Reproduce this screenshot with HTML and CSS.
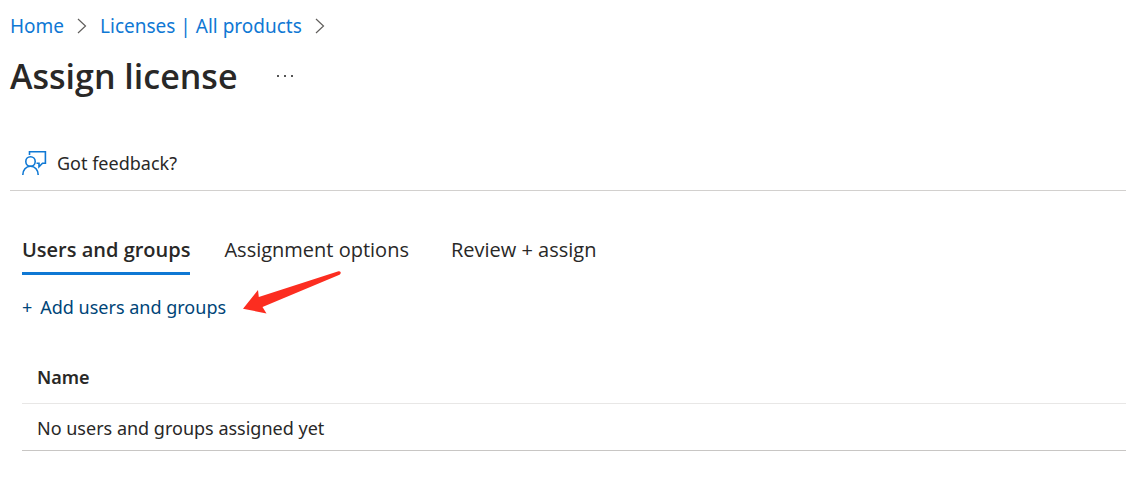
FILE: index.html
```html
<!DOCTYPE html>
<html lang="en">
<head>
<meta charset="utf-8">
<title>Assign license</title>
<link rel="stylesheet" href="styles.css">
</head>
<body>
<main class="page">
  <nav class="breadcrumb" aria-label="Breadcrumb">
    <a href="#">Home</a>
    <svg class="chevron" viewBox="0 0 10 16" aria-hidden="true"><path d="M1 1l7.500 7L1 15"/></svg>
    <a href="#">Licenses | All products</a>
    <svg class="chevron" viewBox="0 0 10 16" aria-hidden="true"><path d="M1 1l7.500 7L1 15"/></svg>
  </nav>
  <header class="title-row">
    <h1 class="title">Assign license</h1>
    <button class="more" type="button" aria-label="More actions">
      <svg class="more-icon" viewBox="0 0 18 4" aria-hidden="true"><path d="M1 1h2v2H1zM8 1h2v2H8zM15 1h2v2h-2z"/></svg>
    </button>
  </header>
  <div class="toolbar">
    <button class="feedback" type="button">
      <svg class="feedback-icon" viewBox="0 0 26 26" aria-hidden="true"><path d="M7.500 5V1.800h15.900v11.500h-2.900l-3.500 3.500v-3.500h-2.500"/><circle cx="8.500" cy="11.500" r="4.700"/><path d="M.8 25c0-5 3.200-8.700 7.700-8.700s7.700 3.700 7.700 8.700"/></svg>
      Got feedback?
    </button>
  </div>
  <section class="content">
    <div class="tabs" role="tablist">
      <button class="tab tab-active" type="button" role="tab" aria-selected="true">Users and groups</button>
      <button class="tab" type="button" role="tab" aria-selected="false">Assignment options</button>
      <button class="tab" type="button" role="tab" aria-selected="false">Review + assign</button>
    </div>
    <div class="add-row">
      <a class="add-link" href="#"><span>+</span><span>Add users and groups</span><svg class="arrow" viewBox="0 0 100 44" aria-hidden="true"><path d="M1 38.700L16 20l.800 7L96.500 1.300c2.500-.6 3 2.400 1 3.500L20.500 37l4 6.500z"/></svg></a>
    </div>
    <table class="members">
      <thead><tr><th scope="col">Name</th></tr></thead>
      <tbody><tr><td>No users and groups assigned yet</td></tr></tbody>
    </table>
  </section>
</main>
</body>
</html>
```
FILE: styles.css
```css
* { box-sizing: border-box; }
body {
  margin: 0;
  background: #fff;
  color: #292827;
  font-family: "Noto Sans", "Open Sans", sans-serif;
  font-size: 18px;
  line-height: 24px;
}
button {
  padding: 0;
  border: 0;
  background: none;
  color: inherit;
  font: inherit;
}
a { color: #0f78d4; text-decoration: none; }
svg { flex: none; fill: none; }
.page { padding: 12px 0 0 10px; }
.breadcrumb {
  display: flex;
  align-items: center;
  gap: 13px;
  font-size: 19px;
  line-height: 28px;
}
.chevron { width: 10px; height: 16px; stroke: #605e5c; stroke-width: 1.2; }
.title-row { display: flex; align-items: center; gap: 38px; margin-top: 12px; }
.title { margin: 0; font-family: "Open Sans", sans-serif; font-size: 34px; line-height: 48px; font-weight: 600; }
.more { display: flex; }
.more-icon { width: 18px; height: 4px; fill: #555; }
.toolbar {
  display: flex;
  margin-top: 36px;
  padding: 14px 12px;
  border-bottom: 1px solid #d2d0ce;
}
.feedback { display: flex; align-items: center; gap: 9px; height: 26px; }
.feedback-icon { width: 26px; height: 26px; stroke: #0f78d4; stroke-width: 1.6; }
.content { padding-left: 12px; }
.tabs { display: flex; gap: 42px; margin-top: 44px; font-family: "Open Sans", sans-serif; font-size: 20px; line-height: 30px; }
.tab { padding: 0 0 7px; border-bottom: 3px solid transparent; white-space: nowrap; }
.tab-active { margin-right: -8px; border-color: #0f78d4; font-weight: 600; }
.add-row { display: flex; margin-top: 20px; }
.add-link { position: relative; display: flex; gap: 8px; color: #004578; }
.arrow { position: absolute; left: 100%; bottom: 5px; width: 100px; height: 44px; margin-left: 16px; fill: #fc2d20; }
.members { width: 100%; margin-top: 32px; border-collapse: collapse; text-align: left; }
.members th { padding: 14px 15px; border-bottom: 1px solid #e8e7e6; font-weight: 600; }
.members td { padding: 12px 15px 10px; border-bottom: 1px solid #c8c6c4; }
```
